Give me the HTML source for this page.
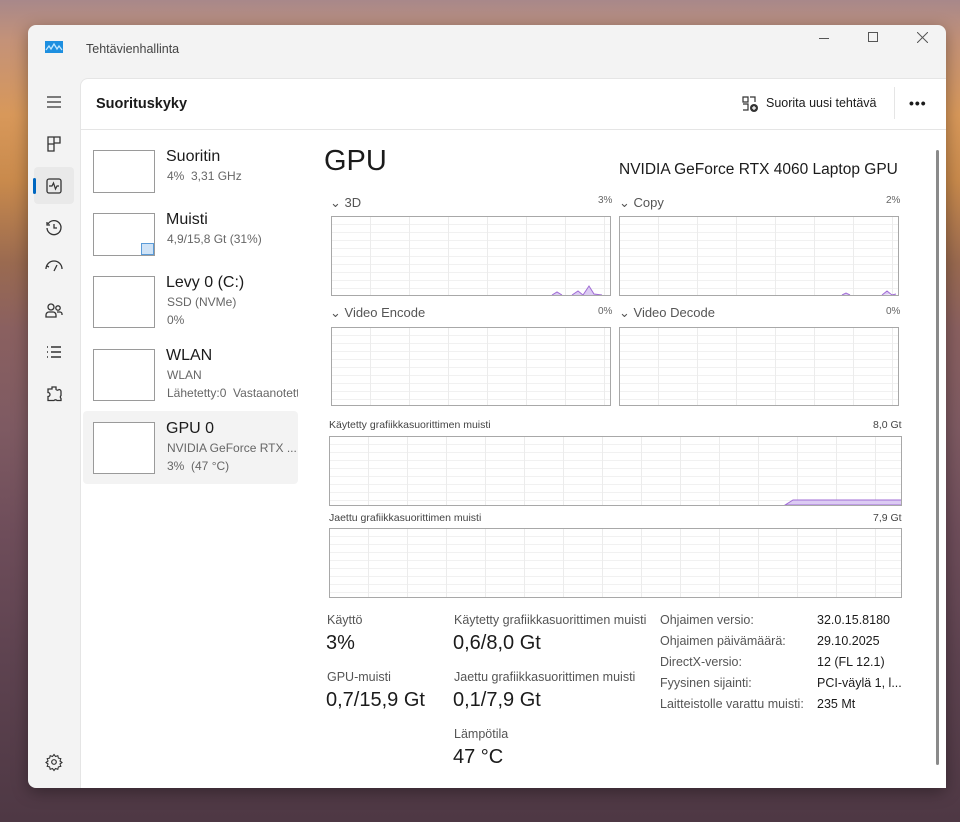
<!DOCTYPE html>
<html><head><meta charset="utf-8"><style>
*{margin:0;padding:0;box-sizing:border-box}
body{width:960px;height:822px;overflow:hidden;position:relative;font-family:"Liberation Sans",sans-serif;color:#1b1b1b;
background:linear-gradient(180deg,#a8888a 0%,#c49278 5%,#d8985a 14%,#c98a4c 22%,#9a6a50 32%,#8a6060 40%,#7e5a62 52%,#6e4d5a 65%,#5e4350 80%,#4e3844 100%);}
.abs{position:absolute}
.win{left:28px;top:25px;width:918px;height:763px;background:#f3f3f3;border-radius:8px;box-shadow:0 4px 16px rgba(0,0,0,.35);overflow:hidden}
.panel{left:80px;top:78px;width:866px;height:710px;background:#fff;border-top-left-radius:8px;border-left:1px solid #e5e5e5;border-top:1px solid #e5e5e5}
.t{position:absolute;white-space:nowrap}
.chart{position:absolute;border:1px solid #a8a8a8;background-color:#fff;
background-image:repeating-linear-gradient(90deg,transparent 0 38px,#ececec 38px 39px),repeating-linear-gradient(180deg,transparent 0 7px,#f1f1f1 7px 8px)}
.thumb{position:absolute;width:62px;height:43px;border:1px solid #9a9a9a;background:#fff}
.ic{position:absolute;left:44px;width:20px;height:20px}
</style></head><body>
<div class="abs win"></div>
<svg class="abs" style="left:45px;top:41px" width="18" height="12"><rect width="18" height="12" fill="#1d8fe0"/><path d="M1 9 L4 5 L6 8 L9 3 L12 8 L14 5 L17 9" stroke="#bfe6ff" stroke-width="1.3" fill="none"/></svg>
<div class="t" style="left:86px;top:42px;font-size:12.5px;color:#444">Tehtävienhallinta</div>
<div class="abs" style="left:819px;top:38px;width:10px;height:1px;background:#555"></div>
<div class="abs" style="left:868px;top:32px;width:10px;height:10px;border:1px solid #555"></div>
<svg class="abs" style="left:917px;top:32px" width="11" height="11"><path d="M0 0L11 11M11 0L0 11" stroke="#555" stroke-width="1"/></svg>
<svg class="ic" style="top:92px" viewBox="0 0 20 20"><path d="M3 5h14M3 10h14M3 15h14" stroke="#333" stroke-width="1.3"/></svg>
<svg class="ic" style="top:134px" viewBox="0 0 20 20"><path d="M4 3h6v14H4zM10 3h6v6h-6zM4 10h6" stroke="#333" stroke-width="1.3" fill="none"/></svg>
<div class="abs" style="left:34px;top:167px;width:40px;height:37px;background:#e9e9e9;border-radius:4px"></div>
<div class="abs" style="left:33px;top:178px;width:3px;height:16px;background:#0067c0;border-radius:2px"></div>
<svg class="ic" style="top:176px" viewBox="0 0 20 20"><rect x="3" y="3" width="14" height="14" rx="2" stroke="#333" stroke-width="1.3" fill="none"/><path d="M5 10h3l1.5-3 2 6 1.5-3h2" stroke="#333" stroke-width="1.2" fill="none"/></svg>
<svg class="ic" style="top:218px" viewBox="0 0 20 20"><path d="M4 6A7 7 0 1 1 3 10M3 4v3h3M10 6v4h3" stroke="#333" stroke-width="1.3" fill="none"/></svg>
<svg class="ic" style="top:259px" viewBox="0 0 20 20"><path d="M2 10a7 7 0 0 1 16 0M10 12l3-6M5 8l-2-1" stroke="#333" stroke-width="1.3" fill="none"/></svg>
<svg class="ic" style="top:300px" viewBox="0 0 20 20"><circle cx="7" cy="7" r="3" stroke="#333" stroke-width="1.3" fill="none"/><circle cx="14" cy="8" r="2.2" stroke="#333" stroke-width="1.3" fill="none"/><path d="M2 17v-2a3 3 0 0 1 3-3h4a3 3 0 0 1 3 3v2zM13 12h3a2 2 0 0 1 2 2v1" stroke="#333" stroke-width="1.3" fill="none"/></svg>
<svg class="ic" style="top:342px" viewBox="0 0 20 20"><path d="M3 5h1M3 10h1M3 15h1M7 5h10M7 10h10M7 15h10" stroke="#333" stroke-width="1.4"/></svg>
<svg class="ic" style="top:384px" viewBox="0 0 20 20"><path d="M8 3h4v2.5a2 2 0 0 0 3 0 2 2 0 0 1 2 2v4a2 2 0 0 0 0 3v2h-4a2 2 0 0 0-3 0H4v-4a2 2 0 0 0 0-4V5h4z" stroke="#333" stroke-width="1.3" fill="none"/></svg>
<svg class="ic" style="top:752px" viewBox="0 0 20 20"><circle cx="10" cy="10" r="2.3" stroke="#333" stroke-width="1.2" fill="none"/><path d="M10 2.5l1.5 2 2.3-.8.6 2.4 2.4.6-.8 2.3 2 1.5-2 1.5.8 2.3-2.4.6-.6 2.4-2.3-.8-1.5 2-1.5-2-2.3.8-.6-2.4-2.4-.6.8-2.3-2-1.5 2-1.5-.8-2.3 2.4-.6.6-2.4 2.3.8z" stroke="#333" stroke-width="1.1" fill="none"/></svg>
<div class="abs panel"></div>
<div class="abs" style="left:81px;top:129px;width:865px;height:1px;background:#e5e5e5"></div>
<div class="t" style="left:96px;top:96px;font-size:14.5px;font-weight:600;color:#1b1b1b">Suorituskyky</div>
<svg class="abs" style="left:741px;top:95px" width="18" height="18" viewBox="0 0 18 18"><path d="M2 2h5v5H2zM9 2h5v5M2 9h5v6H2" stroke="#333" stroke-width="1.2" fill="none"/><circle cx="13" cy="13" r="4" fill="#333"/><path d="M13 11v4M11 13h4" stroke="#fff" stroke-width="1.2"/></svg>
<div class="t" style="left:766px;top:96px;font-size:12.5px">Suorita uusi tehtävä</div>
<div class="abs" style="left:894px;top:87px;width:1px;height:32px;background:#e5e5e5"></div>
<div class="t" style="left:909px;top:95px;font-size:14px;font-weight:bold;letter-spacing:1px">•••</div>
<div class="abs" style="left:936px;top:150px;width:3px;height:615px;background:#8a8a8a;border-radius:2px"></div>
<div class="abs" style="left:83px;top:411px;width:215px;height:73px;background:#f3f3f3;border-radius:4px"></div>
<div class="thumb" style="left:93px;top:150px"></div>
<div class="t" style="left:166px;top:148px;font-size:16px">Suoritin</div>
<div class="t" style="left:167px;top:169px;font-size:12px;color:#666">4%&nbsp; 3,31 GHz</div>
<div class="thumb" style="left:93px;top:213px"><div class="abs" style="right:0;bottom:0;width:13px;height:12px;background:#cfe3f7;border:1px solid #5a9bd8"></div></div>
<div class="t" style="left:166px;top:211px;font-size:16px">Muisti</div>
<div class="t" style="left:167px;top:232px;font-size:12px;color:#666">4,9/15,8 Gt (31%)</div>
<div class="thumb" style="left:93px;top:276px;height:52px"></div>
<div class="t" style="left:166px;top:274px;font-size:16px">Levy 0 (C:)</div>
<div class="t" style="left:167px;top:295px;font-size:12px;color:#666">SSD (NVMe)</div>
<div class="t" style="left:167px;top:313px;font-size:12px;color:#666">0%</div>
<div class="thumb" style="left:93px;top:349px;height:52px"></div>
<div class="t" style="left:166px;top:347px;font-size:16px">WLAN</div>
<div class="t" style="left:167px;top:368px;font-size:12px;color:#666">WLAN</div>
<div class="t" style="left:167px;top:386px;font-size:12px;color:#666;width:131px;overflow:hidden">Lähetetty:0&nbsp; Vastaanotettu</div>
<div class="thumb" style="left:93px;top:422px;height:52px"></div>
<div class="t" style="left:166px;top:420px;font-size:16px">GPU 0</div>
<div class="t" style="left:167px;top:441px;font-size:12px;color:#666">NVIDIA GeForce RTX ...</div>
<div class="t" style="left:167px;top:459px;font-size:12px;color:#666">3%&nbsp; (47 °C)</div>
<div class="t" style="left:324px;top:145px;font-size:29px">GPU</div>
<div class="t" style="left:619px;top:161px;font-size:15.5px">NVIDIA GeForce RTX 4060 Laptop GPU</div>
<div class="t" style="left:330px;top:195px;font-size:13px;color:#555">⌄ 3D</div>
<div class="t" style="left:598px;top:195px;font-size:10px;color:#666">3%</div>
<div class="t" style="left:619px;top:195px;font-size:13px;color:#555">⌄ Copy</div>
<div class="t" style="left:886px;top:195px;font-size:10px;color:#666">2%</div>
<div class="chart" style="left:331px;top:216px;width:280px;height:80px"><svg class="abs" style="left:0;bottom:0" width="278" height="14"><path d="M220 14l5-3 5 3M240 14l6-4 5 4 6-9 5 8 8 1" stroke="#a06cd5" fill="#dccbf3"/></svg></div>
<div class="chart" style="left:619px;top:216px;width:280px;height:80px"><svg class="abs" style="left:0;bottom:0" width="278" height="14"><path d="M222 14l4-2 4 2M262 14l5-4 5 4 4-1" stroke="#a06cd5" fill="#dccbf3"/></svg></div>
<div class="t" style="left:330px;top:305px;font-size:13px;color:#555">⌄ Video Encode</div>
<div class="t" style="left:598px;top:306px;font-size:10px;color:#666">0%</div>
<div class="t" style="left:619px;top:305px;font-size:13px;color:#555">⌄ Video Decode</div>
<div class="t" style="left:886px;top:306px;font-size:10px;color:#666">0%</div>
<div class="chart" style="left:331px;top:327px;width:280px;height:79px"></div>
<div class="chart" style="left:619px;top:327px;width:280px;height:79px"></div>
<div class="t" style="left:329px;top:419px;font-size:10.5px;color:#444">Käytetty grafiikkasuorittimen muisti</div>
<div class="t" style="left:873px;top:419px;font-size:10.5px;color:#444">8,0 Gt</div>
<div class="chart" style="left:329px;top:436px;width:573px;height:70px"><svg class="abs" style="left:0;bottom:0" width="571" height="8"><path d="M455 8l8-5 110 0v5z" stroke="#a06cd5" fill="#dccbf3"/></svg></div>
<div class="t" style="left:329px;top:512px;font-size:10.5px;color:#444">Jaettu grafiikkasuorittimen muisti</div>
<div class="t" style="left:873px;top:512px;font-size:10.5px;color:#444">7,9 Gt</div>
<div class="chart" style="left:329px;top:528px;width:573px;height:70px"></div>
<div class="t" style="left:327px;top:613px;font-size:12.5px;color:#555">Käyttö</div>
<div class="t" style="left:326px;top:632px;font-size:20px">3%</div>
<div class="t" style="left:327px;top:670px;font-size:12.5px;color:#555">GPU-muisti</div>
<div class="t" style="left:326px;top:689px;font-size:20px">0,7/15,9 Gt</div>
<div class="t" style="left:454px;top:613px;font-size:12.5px;color:#555">Käytetty grafiikkasuorittimen muisti</div>
<div class="t" style="left:453px;top:632px;font-size:20px">0,6/8,0 Gt</div>
<div class="t" style="left:454px;top:670px;font-size:12.5px;color:#555">Jaettu grafiikkasuorittimen muisti</div>
<div class="t" style="left:453px;top:689px;font-size:20px">0,1/7,9 Gt</div>
<div class="t" style="left:454px;top:727px;font-size:12.5px;color:#555">Lämpötila</div>
<div class="t" style="left:453px;top:746px;font-size:20px">47 °C</div>
<div class="t" style="left:660px;top:610px;font-size:12.5px;color:#555;line-height:21px">Ohjaimen versio:<br>Ohjaimen päivämäärä:<br>DirectX-versio:<br>Fyysinen sijainti:<br>Laitteistolle varattu muisti:</div>
<div class="t" style="left:817px;top:610px;font-size:12.5px;color:#1b1b1b;line-height:21px">32.0.15.8180<br>29.10.2025<br>12 (FL 12.1)<br>PCI-väylä 1, l...<br>235 Mt</div>
</body></html>
